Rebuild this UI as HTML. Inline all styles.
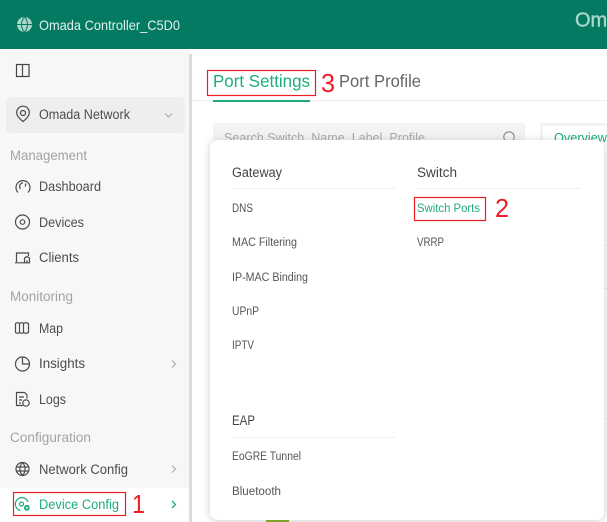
<!DOCTYPE html>
<html><head><meta charset="utf-8"><style>
html,body{margin:0;padding:0;background:#fff;width:607px;height:522px;overflow:hidden}
svg{display:block;filter:blur(.3px)}
text{font-family:"Liberation Sans",sans-serif}
.n{font-size:13.500px;fill:#4d4d4d}
.s{font-size:13.500px;fill:#a3a3a3}
.m{font-size:11.500px;fill:#555}
.h{font-size:13.500px;fill:#444}
.i{fill:none;stroke:#4a4a4a;stroke-width:1.200}
</style></head><body>
<svg width="607" height="522" viewBox="0 0 607 522" xmlns="http://www.w3.org/2000/svg">
<defs><filter id="sh" x="-10%" y="-10%" width="120%" height="120%"><feDropShadow dx="0" dy="1" stdDeviation="4" flood-color="#000" flood-opacity=".2"/></filter></defs>
<rect width="607" height="522" fill="#fff"/>
<rect x="0" y="49" width="189" height="473" fill="#f7f7f7"/>
<rect x="189" y="54" width="3" height="468" fill="#dcdcdc"/>
<rect x="0" y="488" width="189" height="34" fill="#fff"/>
<rect width="607" height="49" fill="#047a63"/>
<circle cx="24.500" cy="24.500" r="7.500" fill="#a9d6cb"/>
<path d="M17 24.500H32M24.500 17c-4 4-4 11 0 15M24.500 17c4 4 4 11 0 15" fill="none" stroke="#047a63" stroke-width="1"/>
<text x="39" y="30" font-size="14" fill="#dff0eb" textLength="141" lengthAdjust="spacingAndGlyphs">Omada Controller_C5D0</text>
<text x="575" y="26.500" font-size="20" fill="#a9d6cb" stroke="#a9d6cb" stroke-width=".4">Om</text>
<g class="i"><rect x="16.500" y="64.500" width="12.500" height="12" stroke="#444"/><path d="M22.500 64.500V76.500"/></g>
<rect x="6" y="97" width="179" height="36" rx="4" fill="#eee"/>
<path class="i" d="M23 121.500c-4-3-6.300-6-6.300-9a6.300 6.300 0 0 1 12.600 0c0 3-2.300 6-6.300 9z"/><circle class="i" cx="23" cy="113" r="2.500"/>
<text class="n" x="39" y="119" textLength="91" lengthAdjust="spacingAndGlyphs">Omada Network</text>
<path d="M165 113.500l3.500 3.500 3.500-3.500" fill="none" stroke="#aaa" stroke-width="1"/>
<text class="s" x="10" y="160" textLength="77" lengthAdjust="spacingAndGlyphs">Management</text>
<path class="i" d="M18 192.500a7 7 0 1 1 10 0M20.500 189a3.800 3.800 0 0 1 2.500-6.200M25.800 183.500l-.5 3"/>
<text class="n" x="39" y="191" textLength="62" lengthAdjust="spacingAndGlyphs">Dashboard</text>
<circle class="i" cx="22.500" cy="222" r="7"/><circle class="i" cx="22.500" cy="222" r="2.300"/>
<text class="n" x="39" y="227" textLength="45" lengthAdjust="spacingAndGlyphs">Devices</text>
<path class="i" d="M16.500 262V253h12v3M15 262.800h9M24.500 262.800v-4.800l2.300-1.500 2.700 1.500v4.800zM27 262.800v-2.500"/>
<text class="n" x="39" y="262" textLength="40" lengthAdjust="spacingAndGlyphs">Clients</text>
<text class="s" x="10" y="301" textLength="63" lengthAdjust="spacingAndGlyphs">Monitoring</text>
<path class="i" d="M15.500 323.500q2-1.500 4 0 2-1.500 4 0 2.500-1.500 5 0v9q-2.500 1.500-5 0-2 1.500-4 0-2 1.500-4 0zM19.500 323.500v9M23.500 323.500v9"/>
<text class="n" x="39" y="333" textLength="24" lengthAdjust="spacingAndGlyphs">Map</text>
<circle class="i" cx="22.500" cy="364" r="7"/><path class="i" d="M22.500 357v7h7"/>
<text class="n" x="39" y="368" textLength="46" lengthAdjust="spacingAndGlyphs">Insights</text>
<path d="M172 360.500l3.500 3.500-3.500 3.500" fill="none" stroke="#aaa" stroke-width="1.100"/>
<path class="i" d="M23 405.500H16.500V392.500h8l2.500 2.500v3.500M19 397h5M19 400h3M19 403h2"/><circle class="i" cx="26" cy="403" r="3.200"/>
<text class="n" x="39" y="404" textLength="27" lengthAdjust="spacingAndGlyphs">Logs</text>
<text class="s" x="10" y="442" textLength="81" lengthAdjust="spacingAndGlyphs">Configuration</text>
<circle class="i" cx="22.500" cy="469" r="6.500"/><path class="i" d="M16 467h13M16 471h13M22.500 462.500c-3.500 4-3.500 9 0 13M22.500 462.500c3.500 4 3.500 9 0 13"/>
<text class="n" x="39" y="474" textLength="89" lengthAdjust="spacingAndGlyphs">Network Config</text>
<path d="M172 465.500l3.500 3.500-3.500 3.500" fill="none" stroke="#aaa" stroke-width="1.100"/>
<g fill="none" stroke="#1ead78" stroke-width="1.200"><path d="M28 502a6.500 6.500 0 1 0-7.500 8.500"/><circle cx="21.500" cy="504" r="2"/></g>
<circle cx="26.800" cy="507.800" r="2.900" fill="#1ead78"/><circle cx="26.800" cy="507.800" r="1" fill="#fff"/>
<text x="39" y="509" font-size="13.500" fill="#1ead78" textLength="80" lengthAdjust="spacingAndGlyphs">Device Config</text>
<path d="M172 501l3.500 3.500-3.500 3.500" fill="none" stroke="#1ead78" stroke-width="1.300"/>
<rect x="13.500" y="492.500" width="112" height="23" fill="none" stroke="#ee1c25" stroke-width="1.200"/>
<text x="132" y="513" font-size="26" fill="#ee1c25" textLength="13" lengthAdjust="spacingAndGlyphs">1</text>
<rect x="192" y="100" width="415" height="1" fill="#eee"/>
<text x="213" y="87" font-size="17.500" fill="#1ead78" textLength="97" lengthAdjust="spacingAndGlyphs">Port Settings</text>
<rect x="213" y="100" width="97" height="2" fill="#1ead78"/>
<rect x="207.500" y="70.500" width="108" height="25" fill="none" stroke="#ee1c25" stroke-width="1.200"/>
<text x="321" y="92" font-size="26" fill="#ee1c25" textLength="14" lengthAdjust="spacingAndGlyphs">3</text>
<text x="339" y="87" font-size="17.500" fill="#666" textLength="82" lengthAdjust="spacingAndGlyphs">Port Profile</text>
<rect x="213" y="123" width="312" height="30" rx="3" fill="#f3f3f3"/>
<text x="224" y="142" font-size="13" fill="#aaa" textLength="201" lengthAdjust="spacingAndGlyphs">Search Switch, Name, Label, Profile</text>
<circle cx="509" cy="137" r="5.200" fill="none" stroke="#888" stroke-width="1.100"/>
<rect x="540" y="123" width="67" height="30" fill="#f3f3f3"/>
<rect x="543" y="126" width="64" height="27" fill="#fff"/>
<text x="554" y="142" font-size="13" fill="#1ead78" textLength="53" lengthAdjust="spacingAndGlyphs">Overview</text>
<rect x="604" y="245" width="3" height="1" fill="#eee"/>
<rect x="604" y="288" width="3" height="1" fill="#eee"/>
<rect x="604" y="418" width="3" height="1" fill="#eee"/>
<rect x="266" y="519" width="23" height="3" fill="#8cb32e"/>
<rect x="210" y="140" width="394" height="380" rx="8" fill="#fff" filter="url(#sh)"/>
<text class="h" x="232" y="177" textLength="50" lengthAdjust="spacingAndGlyphs">Gateway</text>
<rect x="232" y="188" width="164" height="1" fill="#f0f0f0"/>
<text class="h" x="417" y="177" textLength="40" lengthAdjust="spacingAndGlyphs">Switch</text>
<rect x="417" y="188" width="164" height="1" fill="#f0f0f0"/>
<text class="m" x="232" y="212" textLength="21" lengthAdjust="spacingAndGlyphs">DNS</text>
<text x="417" y="212" font-size="11.500" fill="#1ead78" textLength="63" lengthAdjust="spacingAndGlyphs">Switch Ports</text>
<rect x="414.500" y="197.500" width="71" height="23" fill="none" stroke="#ee1c25" stroke-width="1.200"/>
<text x="495" y="217" font-size="26" fill="#ee1c25" textLength="14" lengthAdjust="spacingAndGlyphs">2</text>
<text class="m" x="232" y="246" textLength="65" lengthAdjust="spacingAndGlyphs">MAC Filtering</text>
<text class="m" x="417" y="246" textLength="27" lengthAdjust="spacingAndGlyphs">VRRP</text>
<text class="m" x="232" y="281" textLength="76" lengthAdjust="spacingAndGlyphs">IP-MAC Binding</text>
<text class="m" x="232" y="315" textLength="27" lengthAdjust="spacingAndGlyphs">UPnP</text>
<text class="m" x="232" y="349" textLength="22" lengthAdjust="spacingAndGlyphs">IPTV</text>
<text class="h" x="232" y="425" textLength="23" lengthAdjust="spacingAndGlyphs">EAP</text>
<rect x="232" y="437" width="164" height="1" fill="#f0f0f0"/>
<text class="m" x="232" y="460" textLength="69" lengthAdjust="spacingAndGlyphs">EoGRE Tunnel</text>
<text class="m" x="232" y="495" textLength="49" lengthAdjust="spacingAndGlyphs">Bluetooth</text>
</svg>
</body></html>
